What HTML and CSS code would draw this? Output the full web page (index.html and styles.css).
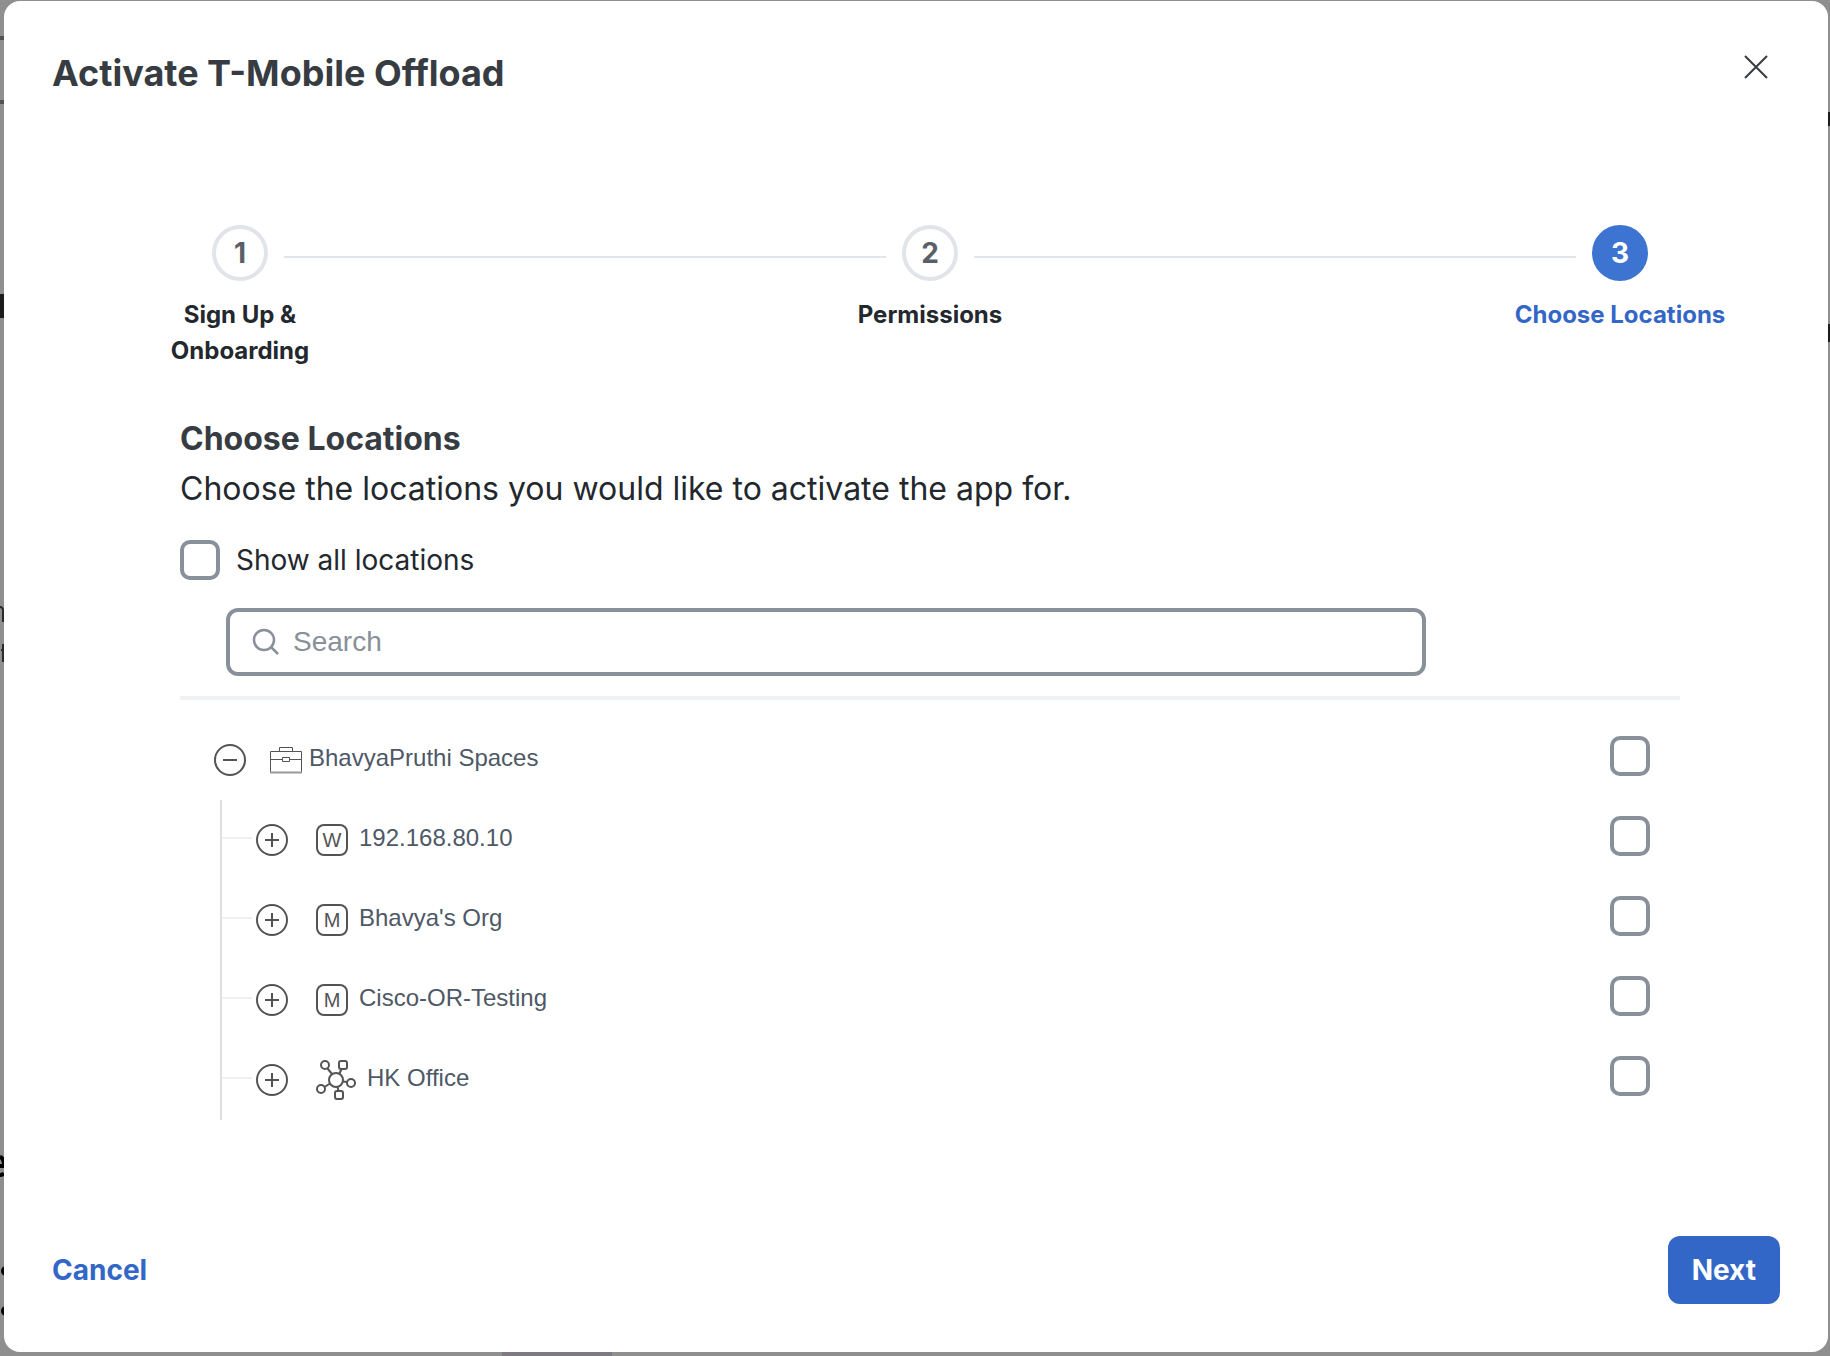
FILE: index.html
```html
<!DOCTYPE html>
<html lang="en">
<head>
<meta charset="utf-8">
<title>Activate T-Mobile Offload</title>
<link rel="stylesheet" href="styles.css">
</head>
<body>
<svg class="sprite" aria-hidden="true">
  <symbol id="plus" viewBox="0 0 32 32"><circle cx="16" cy="16" r="15"/><path d="M9 16h14M16 9v14"/></symbol>
  <symbol id="minus" viewBox="0 0 32 32"><circle cx="16" cy="16" r="15"/><path d="M9 16h14"/></symbol>
</svg>
<div class="marks" aria-hidden="true">
  <i class="mark mark-line-a"></i><i class="mark mark-line-b"></i><i class="mark mark-block"></i>
  <svg class="mark-glyphs" width="4" height="720" viewBox="0 0 4 720">
    <path d="M0 7q3 0 3 4v11M1 50h3M3 44v18" fill="none" stroke="#2b2b2b" stroke-width="2"/>
    <path d="M0 557q4 1 4 9H0M0 575q3 0 4-2" fill="none" stroke="#000" stroke-width="4"/>
    <circle cx="6" cy="671" r="5"/><circle cx="6" cy="711" r="5"/>
  </svg>
  <i class="mark mark-right-a"></i><i class="mark mark-right-b"></i>
  <i class="mark mark-bottom"></i>
</div>
<main class="modal" role="dialog" aria-labelledby="title">
  <header class="modal-header">
    <h1 class="modal-title" id="title">Activate T-Mobile Offload</h1>
    <button class="close" type="button" aria-label="Close">
      <svg width="24" height="24" viewBox="0 0 24 24"><path d="M1 1l22 22M23 1L1 23"/></svg>
    </button>
  </header>
  <ol class="stepper">
    <li class="step"><span class="step-number">1</span><span class="step-label">Sign Up &amp; Onboarding</span></li>
    <li class="step-line" role="presentation"></li>
    <li class="step"><span class="step-number">2</span><span class="step-label">Permissions</span></li>
    <li class="step-line" role="presentation"></li>
    <li class="step step-current" aria-current="step"><span class="step-number">3</span><span class="step-label">Choose Locations</span></li>
  </ol>
  <section class="content">
    <h2 class="section-title">Choose Locations</h2>
    <p class="section-text">Choose the locations you would like to activate the app for.</p>
    <label class="show-all"><input class="checkbox" type="checkbox"><span>Show all locations</span></label>
    <div class="search">
      <svg class="search-icon" width="28" height="28" viewBox="0 0 28 28"><circle cx="12" cy="12" r="10"/><path d="M19 19l7 7"/></svg>
      <input class="search-input" type="text" placeholder="Search" aria-label="Search">
    </div>
    <div class="tree">
      <div class="row">
        <button class="toggle" type="button" aria-label="Collapse BhavyaPruthi Spaces"><svg class="icon" width="32" height="32"><use href="#minus"/></svg></button>
        <label class="row-label row-root" for="loc-root">
          <svg class="icon icon-case" width="32" height="28" viewBox="0 0 32 28"><path d="M.5 27V5.500h31V27M9.500 5V1.500h13V5M.5 13.500h12M19.500 13.500h12M12.500 11.500h7v4h-7z"/><path class="case-base" d="M0 26.500h32"/></svg>
          <span>BhavyaPruthi Spaces</span></label>
        <input class="checkbox" type="checkbox" id="loc-root">
      </div>
      <div class="branch">
        <div class="row">
          <button class="toggle" type="button" aria-label="Expand 192.168.80.10"><svg class="icon" width="32" height="32"><use href="#plus"/></svg></button>
          <label class="row-label" for="loc-1"><span class="badge">W</span><span>192.168.80.10</span></label>
          <input class="checkbox" type="checkbox" id="loc-1">
        </div>
        <div class="row">
          <button class="toggle" type="button" aria-label="Expand Bhavya's Org"><svg class="icon" width="32" height="32"><use href="#plus"/></svg></button>
          <label class="row-label" for="loc-2"><span class="badge">M</span><span>Bhavya's Org</span></label>
          <input class="checkbox" type="checkbox" id="loc-2">
        </div>
        <div class="row">
          <button class="toggle" type="button" aria-label="Expand Cisco-OR-Testing"><svg class="icon" width="32" height="32"><use href="#plus"/></svg></button>
          <label class="row-label" for="loc-3"><span class="badge">M</span><span>Cisco-OR-Testing</span></label>
          <input class="checkbox" type="checkbox" id="loc-3">
        </div>
        <div class="row">
          <button class="toggle" type="button" aria-label="Expand HK Office"><svg class="icon" width="32" height="32"><use href="#plus"/></svg></button>
          <label class="row-label" for="loc-4">
            <svg class="icon icon-network" width="40" height="40" viewBox="0 0 40 40"><circle cx="20" cy="20" r="7"/><circle cx="9" cy="5" r="4"/><rect x="23" y="1" width="8" height="8" rx="2"/><circle cx="35" cy="23" r="4"/><circle cx="5" cy="29" r="4"/><rect x="19" y="31" width="8" height="8" rx="2"/><path d="M11.500 8.500l4.500 5.500M25.500 9l-2 4.500M27 21.500l4 .5M8.500 27l5.500-3.500M21.500 27l1 4"/></svg>
            <span>HK Office</span></label>
          <input class="checkbox" type="checkbox" id="loc-4">
        </div>
      </div>
    </div>
  </section>
  <footer class="modal-footer">
    <button class="cancel" type="button">Cancel</button>
    <button class="next" type="button">Next</button>
  </footer>
</main>
</body>
</html>
```
FILE: styles.css
```css
* { box-sizing: border-box; }

body {
  margin: 0;
  min-height: 100vh;
  display: flex;
  padding: 1px 2px 4px 4px;
  background: #8f8f8f;
  color: #23282e;
  font-family: Inter, "Liberation Sans", sans-serif;
}

button { margin: 0; padding: 0; border: 0; background: none; font: inherit; }
h1, h2, p, ol { margin: 0; padding: 0; }
.sprite { position: absolute; width: 0; height: 0; }

/* Edges of the dimmed page that show round the dialog */
.mark { position: absolute; left: 0; width: 4px; background: #50545a; }
.mark-line-a { top: 36px; height: 4px; }
.mark-line-b { top: 100px; height: 4px; }
.mark-block { top: 294px; height: 24px; background: #1c1c1c; }
.mark-right-a { top: 112px; height: 14px; width: 2px; left: auto; right: 0; background: #1c1c1c; }
.mark-right-b { top: 324px; height: 18px; width: 2px; left: auto; right: 0; background: #1c1c1c; }
.mark-bottom { top: 1352px; left: 502px; width: 110px; height: 4px; background: #7f7983; }
.mark-glyphs { position: absolute; top: 600px; left: 0; }

.modal {
  flex: 1;
  position: relative;
  display: flex;
  flex-direction: column;
  padding: 48px;
  border-radius: 16px;
  background: #fff;
}

.modal-header { display: flex; justify-content: space-between; align-items: flex-start; }
.modal-title { font-size: 36px; line-height: 48px; font-weight: 700; color: #373c42; }
.close { display: flex; margin: 6px 12px 0 0; }
.close svg { fill: none; stroke: #373c42; stroke-width: 2; }

.stepper {
  display: flex;
  align-items: flex-start;
  margin: 128px 48px 0 76px;
  list-style: none;
}
.step { width: 224px; display: flex; flex-direction: column; align-items: center; }
.step-number {
  width: 56px;
  height: 56px;
  display: flex;
  align-items: center;
  justify-content: center;
  border: 4px solid #e1e4e8;
  border-radius: 50%;
  color: #596069;
  font-size: 28px;
  font-weight: 700;
}
.step-label {
  width: 216px;
  margin-top: 16px;
  font-size: 24px;
  line-height: 36px;
  font-weight: 700;
  text-align: center;
}
.step:first-child .step-label { width: 160px; }
.step-line { flex: 1; height: 2px; margin: 31px -68px 0; background: #e1e4e8; }
.step-current .step-number { border-color: #3e74d1; background: #3e74d1; color: #fff; }
.step-current .step-label { color: #3367c7; }

.content { margin: 48px 100px 0 128px; }
.section-title { font-size: 32px; line-height: 44px; font-weight: 700; color: #373c42; }
.section-text { margin-top: 4px; font-size: 32px; line-height: 48px; }
.show-all { display: flex; align-items: center; gap: 16px; margin-top: 27px; font-size: 28px; line-height: 40px; }
.checkbox {
  appearance: none;
  flex: none;
  width: 40px;
  height: 40px;
  margin: 0;
  border: 4px solid #889099;
  border-radius: 10px;
  background: #fff;
}
.search {
  display: flex;
  align-items: center;
  gap: 13px;
  width: 80%;
  height: 68px;
  margin: 28px 0 20px 46px;
  padding: 0 22px;
  border: 4px solid #889099;
  border-radius: 12px;
}
.search-icon { fill: none; stroke: #889099; stroke-width: 2.500; }
.search-input {
  flex: 1;
  border: 0;
  outline: 0;
  padding: 0;
  background: none;
  font-family: "Liberation Sans", Arial, sans-serif;
  font-size: 28px;
}
.search-input::placeholder { color: #889099; opacity: 1; }

.tree {
  padding: 20px 30px 0 34px;
  border-top: 4px solid #f0f1f2;
  color: #4e5866;
  font-family: "Liberation Sans", Arial, sans-serif;
  font-size: 24px;
}
.row { display: flex; align-items: center; height: 80px; padding-bottom: 4px; }
.row .checkbox { margin-bottom: 4px; }
.toggle { display: flex; margin-top: 4px; }
.icon { flex: none; fill: none; stroke: #545454; stroke-width: 2; }
.icon-case { margin-top: 4px; stroke-width: 1; }
.case-base { stroke: #999; stroke-width: 2; }
.icon-network { margin-top: 4px; }
.row-label { flex: 1; display: flex; align-items: center; gap: 11px; margin-left: 28px; }
.row-root { gap: 7px; margin-left: 24px; }
.badge {
  width: 32px;
  height: 32px;
  display: flex;
  align-items: center;
  justify-content: center;
  margin-top: 4px;
  border: 2px solid #545454;
  border-radius: 8px;
  color: #545454;
  font-size: 20px;
}
.branch { margin-left: 6px; border-left: 2px solid #dedfe4; }
.branch .row::before { content: ""; width: 30px; height: 2px; margin-right: 4px; background: #f0f0f0; }

.modal-footer {
  display: flex;
  justify-content: space-between;
  align-items: center;
  margin-top: auto;
  font-size: 28px;
  font-weight: 700;
}
.cancel { color: #3367c7; }
.next { height: 68px; padding: 0 24px; border-radius: 12px; background: #3367c7; color: #fff; }
```
